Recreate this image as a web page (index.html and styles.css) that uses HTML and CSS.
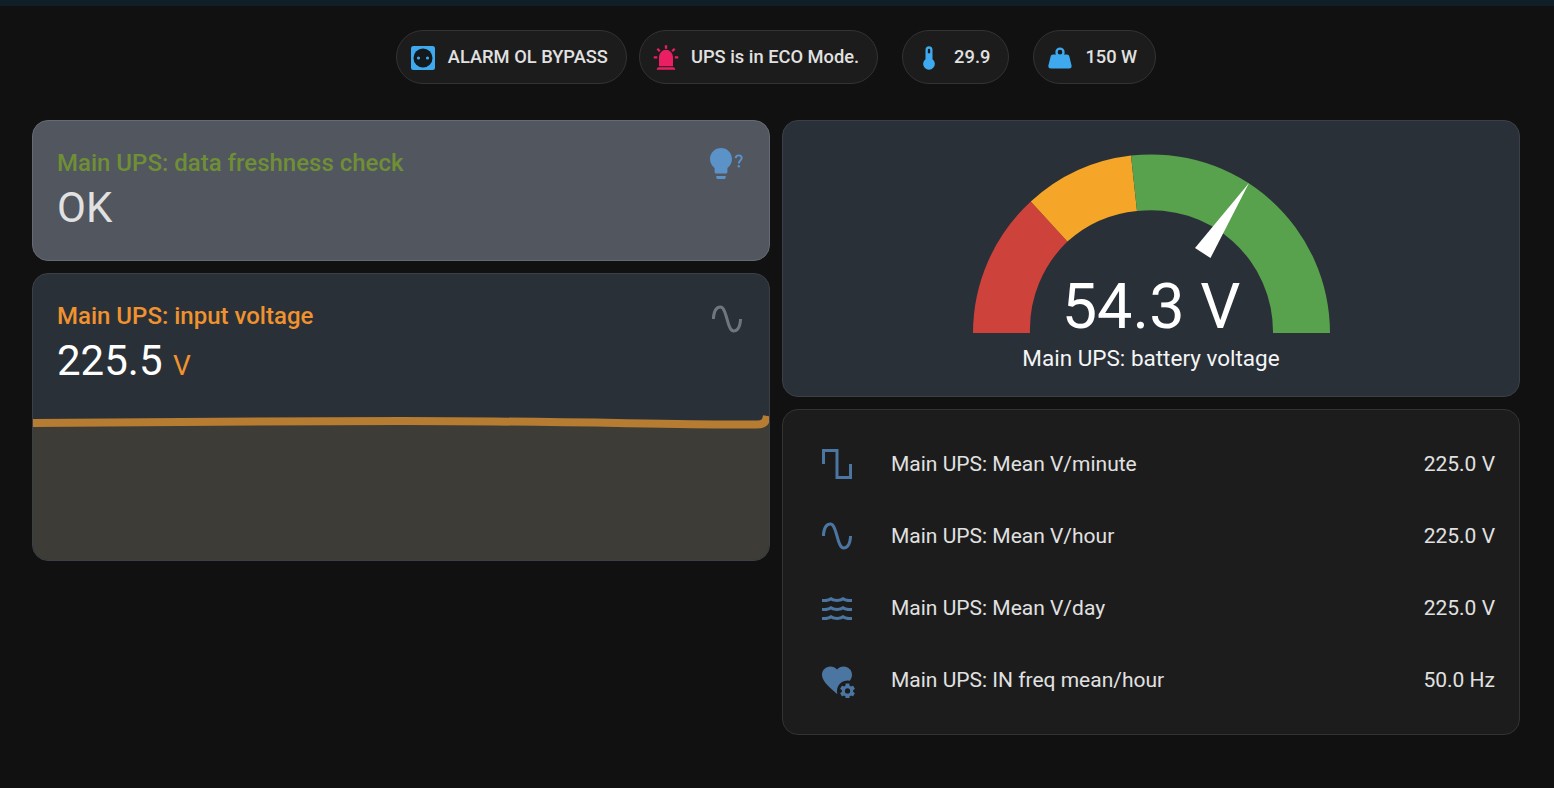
FILE: index.html
```html
<!DOCTYPE html>
<html lang="en">
<head>
	<meta charset="UTF-8">
	<title>Main UPS</title>
	<link rel="stylesheet" href="styles.css">
</head>
<body>
	<div class="topbar"></div>

	<div class="chips">
		<div class="chip">
			<span class="chip-icon">
				<svg viewBox="0 0 24 24" width="24" height="24"><rect x="0" y="0" width="24" height="24" rx="2.5" fill="#3fa9f0"/><circle cx="12" cy="12" r="9.5" fill="#14191d"/><circle cx="7.5" cy="12" r="1.6" fill="#3fa9f0"/><circle cx="16.5" cy="12" r="1.6" fill="#3fa9f0"/></svg>
			</span>
			<span class="chip-label">ALARM OL BYPASS</span>
		</div>
		<div class="chip">
			<span class="chip-icon">
				<svg viewBox="0 0 24 24" width="28" height="28"><path fill="#e91e63" d="M6,6.9L3.87,4.78L5.28,3.37L7.4,5.5L6,6.9M13,1V4H11V1H13M20.13,4.78L18,6.9L16.6,5.5L18.72,3.37L20.13,4.78M4.5,10.5V12.5H1.5V10.5H4.5M19.5,10.5H22.5V12.5H19.5V10.5M6,20H18A2,2 0 0,1 20,22H4A2,2 0 0,1 6,20M12,5A6,6 0 0,1 18,11V19H6V11A6,6 0 0,1 12,5Z"/></svg>
			</span>
			<span class="chip-label">UPS is in ECO Mode.</span>
		</div>
		<div class="chip chip-apart">
			<span class="chip-icon">
				<svg viewBox="0 0 24 24" width="28" height="28"><path fill="#3fa9f0" d="M15 13V5A3 3 0 0 0 9 5V13A5 5 0 1 0 15 13M12 4A1 1 0 0 1 13 5V8H11V5A1 1 0 0 1 12 4Z"/></svg>
			</span>
			<span class="chip-label">29.9</span>
		</div>
		<div class="chip chip-apart">
			<span class="chip-icon">
				<svg viewBox="0 0 24 24" width="28" height="28"><path fill="#3fa9f0" d="M12,3A4,4 0 0,1 16,7C16,7.73 15.81,8.41 15.46,9H18C18.95,9 19.75,9.67 19.95,10.56C21.96,18.57 22,18.78 22,19A2,2 0 0,1 20,21H4A2,2 0 0,1 2,19C2,18.78 2.04,18.57 4.05,10.56C4.25,9.67 5.05,9 6,9H8.54C8.19,8.41 8,7.73 8,7A4,4 0 0,1 12,3M12,5A2,2 0 0,0 10,7A2,2 0 0,0 12,9A2,2 0 0,0 14,7A2,2 0 0,0 12,5Z"/></svg>
			</span>
			<span class="chip-label">150 W</span>
		</div>
	</div>

	<div class="columns">
		<div class="column">
			<div class="card card-fresh">
				<div class="sensor-head">
					<div>
						<div class="sensor-name name-green">Main UPS: data freshness check</div>
						<div class="sensor-value value-dim">OK</div>
					</div>
					<svg class="sensor-icon" viewBox="0 0 36 36" width="36" height="36">
						<path fill="#5b93c9" d="M12 0C18 0 23 4.8 23 11C23 14.7 21.2 18 18.4 19.9V24C18.4 24.9 17.8 25.5 16.9 25.5H7.1C6.2 25.5 5.6 24.9 5.6 24V19.9C2.8 18 1 14.7 1 11C1 4.8 6 0 12 0M7.3 29.5V28H16.7V29.5C16.7 30.4 16.1 31 15.2 31H8.8C7.9 31 7.3 30.4 7.3 29.5Z"/>
						<path fill="none" stroke="#5b93c9" stroke-width="1.9" d="M26.6 10.2C26.8 8.2 28.2 7.4 29.7 7.4C31.4 7.4 32.7 8.5 32.7 10.1C32.7 12.4 29.8 12.6 29.8 15.4"/>
						<circle cx="29.8" cy="18.2" r="1.2" fill="#5b93c9"/>
					</svg>
				</div>
			</div>

			<div class="card card-input">
				<div class="sensor-head">
					<div>
						<div class="sensor-name name-orange">Main UPS: input voltage</div>
						<div class="sensor-value">225.5 <span class="sensor-unit">V</span></div>
					</div>
					<svg class="sensor-icon icon-grey" viewBox="0 0 24 24" width="36" height="36"><path d="M16.5,21C13.5,21 12.31,16.76 11.05,12.28C10.14,9.04 9,5 7.5,5C4.11,5 4,11.93 4,12H2C2,11.63 2.06,3 7.5,3C10.5,3 11.71,7.25 12.97,11.74C13.83,14.8 15,19 16.5,19C19.94,19 20.03,12.07 20.03,12H22.03C22.03,12.37 21.97,21 16.5,21Z"/></svg>
				</div>
				<svg class="spark" viewBox="0 0 736 160" width="736" height="160">
					<path fill="#3d3c37" d="M0 13C120 12 250 11 370 11C500 11 620 14 700 14.5L724 14.5C731 14.5 733 12 734 6L736 6V160H0Z"/>
					<path fill="none" stroke="#b67c31" stroke-width="8" d="M0 13C120 12 250 11 370 11C500 11 620 14 700 14.5L724 14.5C731 14.5 733 12 734 6"/>
				</svg>
			</div>
		</div>

		<div class="column">
			<div class="card card-gauge">
				<div class="gauge">
					<svg viewBox="0 0 357 179" width="357" height="179">
						<path fill="#cd423b" d="M0 179A178.5 178.5 0 0 1 57.8 47.6L94.4 87.6A121.5 121.5 0 0 0 57 179Z"/>
						<path fill="#f5a528" d="M57.8 47.6A178.5 178.5 0 0 1 158 1.6L164 57A121.5 121.5 0 0 0 94.4 87.6Z"/>
						<path fill="#58a14d" d="M158 1.6A178.5 178.5 0 0 1 357 179H300A121.5 121.5 0 0 0 164 57Z"/>
						<polygon fill="#fff" points="276,29 222,94 237.5,104"/>
					</svg>
					<div class="gauge-value">54.3 V</div>
				</div>
				<div class="gauge-name">Main UPS: battery voltage</div>
			</div>

			<div class="card card-list">
				<div class="row">
					<svg class="row-icon" viewBox="0 0 24 24"><path d="M2,2V12H4V4H11V22H22V12H20V20H13V2H2Z"/></svg>
					<span class="row-name">Main UPS: Mean V/minute</span>
					<span>225.0 V</span>
				</div>
				<div class="row">
					<svg class="row-icon" viewBox="0 0 24 24"><path d="M16.5,21C13.5,21 12.31,16.76 11.05,12.28C10.14,9.04 9,5 7.5,5C4.11,5 4,11.93 4,12H2C2,11.63 2.06,3 7.5,3C10.5,3 11.71,7.25 12.97,11.74C13.83,14.8 15,19 16.5,19C19.94,19 20.03,12.07 20.03,12H22.03C22.03,12.37 21.97,21 16.5,21Z"/></svg>
					<span class="row-name">Main UPS: Mean V/hour</span>
					<span>225.0 V</span>
				</div>
				<div class="row">
					<svg class="row-icon" viewBox="0 0 24 24"><path d="M20,12H22V14H20C18.62,14 17.26,13.65 16,13C13.5,14.3 10.5,14.3 8,13C6.74,13.65 5.37,14 4,14H2V12H4C5.39,12 6.78,11.53 8,10.67C10.44,12.38 13.56,12.38 16,10.67C17.22,11.53 18.61,12 20,12M20,6H22V8H20C18.62,8 17.26,7.65 16,7C13.5,8.3 10.5,8.3 8,7C6.74,7.65 5.37,8 4,8H2V6H4C5.39,6 6.78,5.53 8,4.67C10.44,6.38 13.56,6.38 16,4.67C17.22,5.53 18.61,6 20,6M20,18H22V20H20C18.62,20 17.26,19.65 16,19C13.5,20.3 10.5,20.3 8,19C6.74,19.65 5.37,20 4,20H2V18H4C5.39,18 6.78,17.53 8,16.67C10.44,18.38 13.56,18.38 16,16.67C17.22,17.53 18.61,18 20,18Z"/></svg>
					<span class="row-name">Main UPS: Mean V/day</span>
					<span>225.0 V</span>
				</div>
				<div class="row">
					<svg class="row-icon" viewBox="0 0 24 24">
						<path d="M12.2,21.15L12,21.35L10.55,20.03C5.4,15.36 2,12.27 2,8.5C2,5.41 4.42,3 7.5,3C9.24,3 10.91,3.81 12,5.08C13.09,3.81 14.76,3 16.5,3C19.58,3 22,5.41 22,8.5C22,9.9 21.5,11.2 20.5,12.5A7,7 0 0 0 12.2,21.15Z"/>
						<path transform="translate(13 13.3) scale(0.5)" d="M12,15.5A3.5,3.5 0 0,1 8.5,12A3.5,3.5 0 0,1 12,8.5A3.5,3.5 0 0,1 15.5,12A3.5,3.5 0 0,1 12,15.5M19.43,12.97C19.47,12.65 19.5,12.33 19.5,12C19.5,11.67 19.47,11.34 19.43,11L21.54,9.37C21.73,9.22 21.78,8.95 21.66,8.73L19.66,5.27C19.54,5.05 19.27,4.96 19.05,5.05L16.56,6.05C16.04,5.66 15.5,5.32 14.87,5.07L14.5,2.42C14.46,2.18 14.25,2 14,2H10C9.75,2 9.54,2.18 9.5,2.42L9.13,5.07C8.5,5.32 7.96,5.66 7.44,6.05L4.95,5.05C4.73,4.96 4.46,5.05 4.34,5.27L2.34,8.73C2.21,8.95 2.27,9.22 2.46,9.37L4.57,11C4.53,11.34 4.5,11.67 4.5,12C4.5,12.33 4.53,12.65 4.57,12.97L2.46,14.63C2.27,14.78 2.21,15.05 2.34,15.27L4.34,18.73C4.46,18.95 4.73,19.03 4.95,18.95L7.44,17.94C7.96,18.34 8.5,18.68 9.13,18.93L9.5,21.58C9.54,21.82 9.75,22 10,22H14C14.25,22 14.46,21.82 14.5,21.58L14.87,18.93C15.5,18.67 16.04,18.34 16.56,17.94L19.05,18.95C19.27,19.03 19.54,18.95 19.66,18.73L21.66,15.27C21.78,15.05 21.73,14.78 21.54,14.63L19.43,12.97Z"/>
					</svg>
					<span class="row-name">Main UPS: IN freq mean/hour</span>
					<span>50.0 Hz</span>
				</div>
			</div>
		</div>
	</div>
</body>
</html>
```
FILE: styles.css
```css
html, body {
	margin: 0;
	padding: 0;
	background: #111111;
	color: #e1e1e1;
	font-family: Roboto, "Liberation Sans", sans-serif;
}
.topbar {
	height: 6px;
	background: #101e27;
}
.chips {
	display: flex;
	justify-content: center;
	gap: 12px;
	margin: 24px 0 36px;
	padding-right: 2px;
}
.chip {
	display: flex;
	align-items: center;
	gap: 9px;
	height: 54px;
	box-sizing: border-box;
	padding: 0 18px 0 10px;
	background: #1c1c1c;
	border: 1px solid #333333;
	border-radius: 27px;
	font-size: 18.3px;
	font-weight: 500;
}
.chip-apart {
	margin-left: 12px;
}
.chip-icon {
	display: flex;
	justify-content: center;
	align-items: center;
	width: 32px;
	margin-top: 2px;
}
.chip-label {
	padding-bottom: 2px;
}
.columns {
	display: grid;
	grid-template-columns: 738px 738px;
	gap: 12px;
	padding: 0 34px 0 32px;
}
.column {
	display: flex;
	flex-direction: column;
	gap: 12px;
}
.card {
	box-sizing: border-box;
	border: 1px solid #3c4046;
	border-radius: 16px;
	overflow: hidden;
}
.card-fresh {
	height: 141px;
	background: #51565f;
	border-color: #666a75;
}
.card-input {
	height: 288px;
	background: #293038;
}
.card-gauge {
	height: 277px;
	background: #293038;
}
.card-list {
	height: 326px;
	padding: 18px 24px 18px 36px;
	background: #1c1c1c;
	border-color: #333333;
}
.sensor-head {
	display: flex;
	justify-content: space-between;
	padding: 24px 24px 0;
}
.sensor-name {
	font-size: 24px;
	font-weight: 500;
	line-height: 36px;
}
.name-green {
	color: #6f8f35;
}
.name-orange {
	color: #f0922e;
}
.sensor-value {
	font-size: 42px;
	line-height: 54px;
	color: #ffffff;
}
.value-dim {
	color: #e1e1e1;
}
.sensor-unit {
	font-size: 28px;
	color: #f0922e;
}
.sensor-icon {
	margin-top: 3px;
}
.icon-grey {
	fill: #71767d;
}
.spark {
	display: block;
	margin-top: 17px;
}
.gauge {
	position: relative;
	width: 357px;
	margin: 33px auto 0;
}
.gauge svg {
	display: block;
}
.gauge-value {
	position: absolute;
	left: 0;
	right: 0;
	bottom: -10px;
	text-align: center;
	font-size: 63px;
	line-height: 72px;
	color: #ffffff;
}
.gauge-name {
	margin-top: 10px;
	text-align: center;
	font-size: 22.5px;
	line-height: 30px;
	color: #f5f5f5;
}
.row {
	display: flex;
	align-items: center;
	height: 72px;
	font-size: 21px;
	color: #e1e1e1;
}
.row-icon {
	width: 36px;
	height: 36px;
	fill: #4c76a2;
	margin-right: 36px;
}
.row-name {
	flex: 1;
}
```
